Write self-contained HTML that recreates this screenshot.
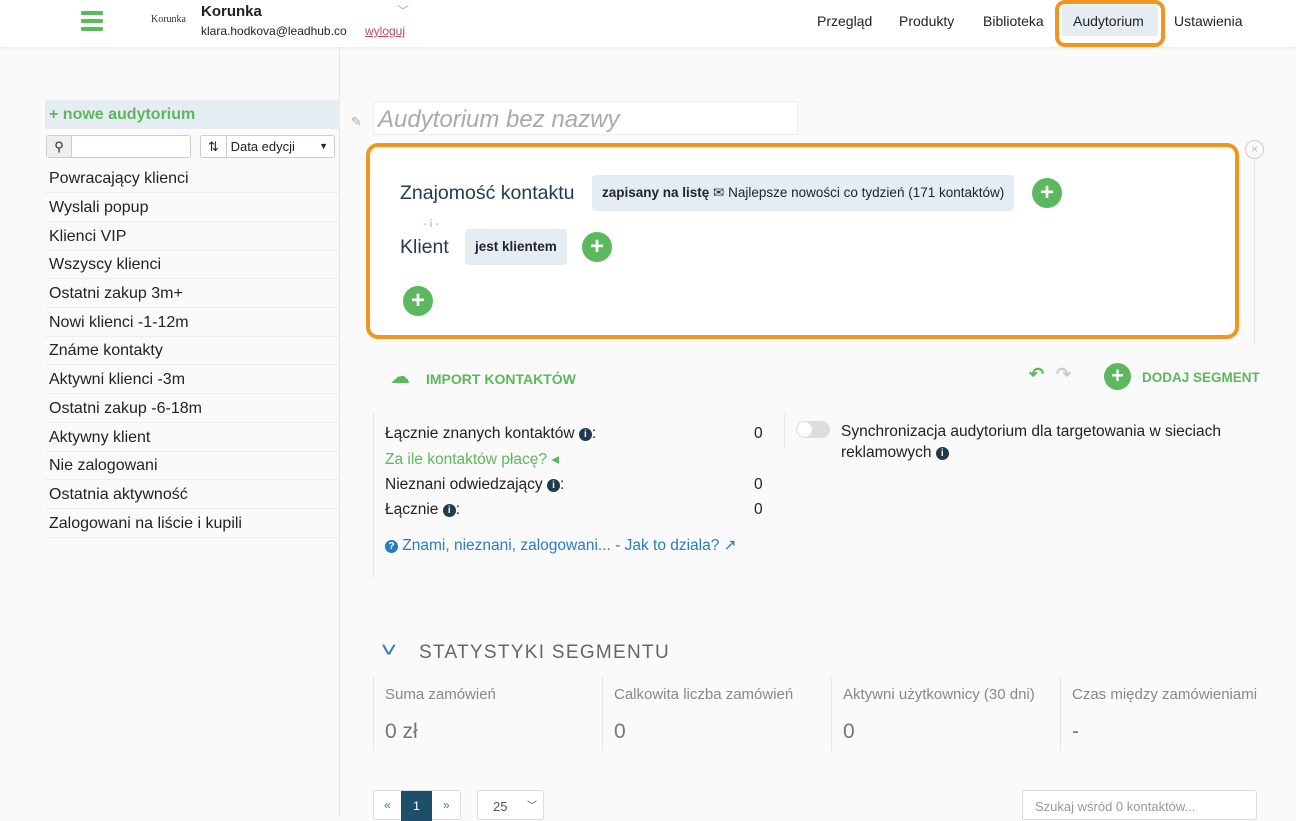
<!DOCTYPE html>
<html><head><meta charset="utf-8"><style>
*{box-sizing:border-box;margin:0;padding:0}
body{width:1296px;height:816px;overflow:hidden;background:#fafafa;font-family:"Liberation Sans",sans-serif;color:#222;position:relative}
.a{position:absolute;white-space:nowrap}
.c{font-family:"Liberation Sans",sans-serif}
.hdr{position:absolute;left:0;top:0;width:1296px;height:47px;background:#fff;box-shadow:0 1px 3px rgba(0,0,0,.08)}
.side{position:absolute;left:0;top:47px;width:340px;height:769px;border-right:1px solid #e6e6e6}
.li{position:absolute;left:45px;width:295px;height:29px;border-bottom:1px solid #eee;font-size:16px;padding:6px 0 0 4px;color:#222}
.plus{position:absolute;width:30px;height:30px;border-radius:50%;background:#5cb85c;color:#fff;font-size:24px;line-height:29px;text-align:center;font-weight:bold}
.tag{position:absolute;background:#e6edf2;border-radius:4px;font-size:13.5px;color:#223;height:36px;line-height:36px;padding:0 10px}
.inf{display:inline-block;width:13px;height:13px;border-radius:50%;background:#1f3b4d;color:#fff;font-size:10px;line-height:13px;text-align:center;font-weight:bold;vertical-align:1px}
</style></head><body>
<div class="hdr">
 <div class="a" style="left:81px;top:11px;width:22px;height:4px;background:#5cb85c;box-shadow:0 8px 0 #5cb85c,0 16px 0 #5cb85c;border-radius:1px"></div>
 <div class="a" style="left:151px;top:14px;font-family:'Liberation Serif',serif;font-size:10px;color:#333">Korunka</div>
 <div class="a" style="left:201px;top:3px;font-size:15px;font-weight:bold">Korunka</div>
 <div class="a" style="left:201px;top:24px;font-size:12px">klara.hodkova@leadhub.co</div>
 <div class="a" style="left:365px;top:24px;font-size:12px;color:#c0496d;text-decoration:underline">wyloguj</div>
 <div class="a" style="left:397px;top:2px;font-size:12px;color:#aaa">﹀</div>
 <div class="a" style="left:817px;top:13px;font-size:14px">Przegląd</div>
 <div class="a" style="left:899px;top:13px;font-size:14px">Produkty</div>
 <div class="a" style="left:983px;top:13px;font-size:14px">Biblioteka</div>
 <div class="a" style="left:1055px;top:0;width:110px;height:47px;border:4px solid #f0961e;border-radius:10px;background:#fff"></div>
 <div class="a" style="left:1062px;top:5px;width:96px;height:31px;background:#e6edf2;border-radius:3px"></div>
 <div class="a" style="left:1073px;top:13px;font-size:14px">Audytorium</div>
 <div class="a" style="left:1174px;top:13px;font-size:14px">Ustawienia</div>
</div>
<div class="side">
 <div class="a" style="left:45px;top:53px;width:295px;height:29px;background:#e6edf2;color:#5cb85c;font-size:16px;font-weight:bold;padding:6px 0 0 4px">+ nowe audytorium</div>
 <div class="a" style="left:46px;top:88px;width:145px;height:23px;border:1px solid #ccc;border-radius:3px;background:#fff"><div style="width:25px;height:21px;background:#eee;border-right:1px solid #ccc;font-size:13px;text-align:center;line-height:21px">&#9906;</div></div>
 <div class="a" style="left:200px;top:88px;width:135px;height:23px;border:1px solid #ccc;border-radius:3px;background:#fff;font-size:13px;line-height:21px"><span style="display:inline-block;width:26px;border-right:1px solid #ccc;text-align:center">⇅</span> Data edycji <span style="position:absolute;right:6px;font-size:9px">▼</span></div>
</div>
<div class="li c" style="top:164px">Powracający klienci</div>
<div class="li c" style="top:193px">Wyslali popup</div>
<div class="li c" style="top:222px">Klienci VIP</div>
<div class="li c" style="top:250px">Wszyscy klienci</div>
<div class="li c" style="top:279px">Ostatni zakup 3m+</div>
<div class="li c" style="top:308px">Nowi klienci -1-12m</div>
<div class="li c" style="top:336px">Známe kontakty</div>
<div class="li c" style="top:365px">Aktywni klienci -3m</div>
<div class="li c" style="top:394px">Ostatni zakup -6-18m</div>
<div class="li c" style="top:423px">Aktywny klient</div>
<div class="li c" style="top:451px">Nie zalogowani</div>
<div class="li c" style="top:480px">Ostatnia aktywność</div>
<div class="li c" style="top:509px">Zalogowani na liście i kupili</div>

<div class="a" style="left:351px;top:114px;color:#aaa;font-size:13px">✎</div>
<div class="a c" style="left:373px;top:101px;width:425px;height:34px;border:1px solid #eee;background:#fff;font-size:24px;font-style:italic;color:#aaa;padding:4px 4px">Audytorium bez nazwy</div>
<div class="a" style="left:1245px;top:140px;width:19px;height:19px;border:1px solid #ccc;border-radius:50%;color:#bbb;font-size:12px;text-align:center;line-height:17px">×</div>
<div class="a" style="left:1254px;top:159px;width:1px;height:186px;background:#e6e6e6"></div>
<div class="a" style="left:366px;top:143px;width:873px;height:196px;border:4px solid #f0961e;border-radius:12px;background:#fff"></div>
<div class="a c" style="left:400px;top:182px;font-size:19.5px;color:#1f3b4d">Znajomość kontaktu</div>
<div class="tag c" style="left:592px;top:175px"><b>zapisany na listę</b> ✉ Najlepsze nowości co tydzień (171 kontaktów)</div>
<div class="plus" style="left:1032px;top:178px">+</div>
<div class="a" style="left:423px;top:218px;font-size:11px;color:#aaa">- i -</div>
<div class="a c" style="left:400px;top:236px;font-size:19.5px;color:#1f3b4d">Klient</div>
<div class="tag c" style="left:465px;top:229px"><b>jest klientem</b></div>
<div class="plus" style="left:582px;top:232px">+</div>
<div class="plus" style="left:403px;top:286px">+</div>

<div class="a" style="left:390px;top:364px;color:#5cb85c;font-size:20px">☁</div>
<div class="a c" style="left:426px;top:371px;color:#5cb85c;font-size:14px;font-weight:bold">IMPORT KONTAKTÓW</div>
<div class="a" style="left:1029px;top:364px;color:#5cb85c;font-size:18px;font-weight:bold">↶</div>
<div class="a" style="left:1056px;top:364px;color:#ccc;font-size:18px;font-weight:bold">↷</div>
<div class="plus" style="left:1104px;top:363px;width:27px;height:27px;line-height:26px;font-size:22px">+</div>
<div class="a c" style="left:1142px;top:370px;color:#5cb85c;font-size:13.5px;font-weight:bold">DODAJ SEGMENT</div>

<div class="a" style="left:373px;top:413px;width:1px;height:165px;background:#e6e6e6"></div>
<div class="a" style="left:784px;top:413px;width:1px;height:35px;background:#e6e6e6"></div>
<div class="a c" style="left:385px;top:425px;font-size:15.5px">Łącznie znanych kontaktów <span class="inf">i</span>:</div>
<div class="a c" style="left:385px;top:450px;font-size:15.5px;color:#5cb85c">Za ile kontaktów płacę? ◂</div>
<div class="a c" style="left:385px;top:476px;font-size:15.5px">Nieznani odwiedzający <span class="inf">i</span>:</div>
<div class="a c" style="left:385px;top:501px;font-size:15.5px">Łącznie <span class="inf">i</span>:</div>
<div class="a c" style="left:754px;top:425px;font-size:15.5px">0</div>
<div class="a c" style="left:754px;top:476px;font-size:15.5px">0</div>
<div class="a c" style="left:754px;top:501px;font-size:15.5px">0</div>
<div class="a c" style="left:385px;top:536px;font-size:15.5px;color:#2b7bbf"><span class="inf" style="background:#2b7bbf">?</span> Znami, nieznani, zalogowani... - Jak to dziala? ↗</div>
<div class="a" style="left:796px;top:421px;width:34px;height:17px;border-radius:9px;background:#ddd"><div style="width:15px;height:15px;border-radius:50%;background:#fff;margin:1px"></div></div>
<div class="a c" style="left:841px;top:421px;font-size:15.5px;line-height:21px">Synchronizacja audytorium dla targetowania w sieciach<br>reklamowych <span class="inf">i</span></div>

<div class="a" style="left:383px;top:640px;color:#2b7bbf;font-size:20px;transform:scaleX(1.4)">˅</div>
<div class="a c" style="left:419px;top:642px;font-size:19px;color:#666;letter-spacing:1.3px">STATYSTYKI SEGMENTU</div>
<div class="a" style="left:373px;top:677px;width:1px;height:74px;background:#e6e6e6"></div>
<div class="a" style="left:602px;top:677px;width:1px;height:74px;background:#e6e6e6"></div>
<div class="a" style="left:831px;top:677px;width:1px;height:74px;background:#e6e6e6"></div>
<div class="a" style="left:1060px;top:677px;width:1px;height:74px;background:#e6e6e6"></div>
<div class="a c" style="left:385px;top:686px;font-size:15px;color:#888">Suma zamówień</div>
<div class="a c" style="left:614px;top:686px;font-size:15px;color:#888">Calkowita liczba zamówień</div>
<div class="a c" style="left:843px;top:686px;font-size:15px;color:#888">Aktywni użytkownicy (30 dni)</div>
<div class="a c" style="left:1072px;top:686px;font-size:15px;color:#888">Czas między zamówieniami</div>
<div class="a c" style="left:385px;top:720px;font-size:21px;color:#777">0 zł</div>
<div class="a c" style="left:614px;top:720px;font-size:21px;color:#777">0</div>
<div class="a c" style="left:843px;top:720px;font-size:21px;color:#777">0</div>
<div class="a c" style="left:1072px;top:720px;font-size:21px;color:#777">-</div>

<div class="a" style="left:373px;top:790px;width:88px;height:30px;border:1px solid #ddd;border-radius:3px;background:#fff;font-size:12px;color:#2b7bbf"><span style="position:absolute;left:10px;top:7px">«</span><span style="position:absolute;left:27px;top:0;width:31px;height:30px;background:#1f4e6b;color:#fff;text-align:center;line-height:30px">1</span><span style="position:absolute;left:69px;top:7px">»</span></div>
<div class="a" style="left:477px;top:790px;width:67px;height:30px;border:1px solid #ddd;border-radius:3px;background:#fff;font-size:13px;padding:8px 0 0 15px;color:#555">25 <span style="position:absolute;right:6px;top:6px;font-size:10px">﹀</span></div>
<div class="a c" style="left:1022px;top:790px;width:235px;height:30px;border:1px solid #ddd;border-radius:3px;background:#fff;font-size:13px;padding:8px 0 0 12px;color:#999">Szukaj wśród 0 kontaktów...</div>
</body></html>
